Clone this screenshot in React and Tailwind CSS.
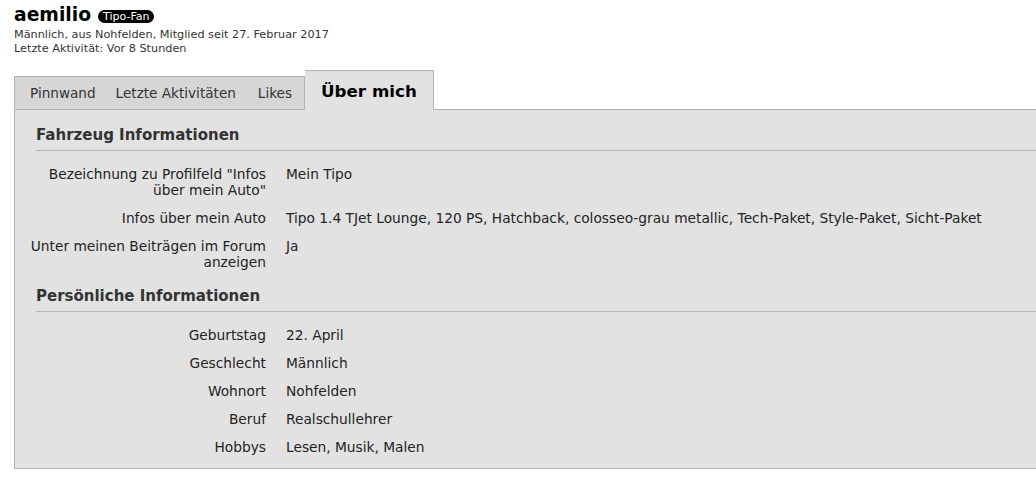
import React from 'react';

const fahrzeug = [
  { label: 'Bezeichnung zu Profilfeld "Infos über mein Auto"', value: 'Mein Tipo' },
  { label: 'Infos über mein Auto', value: 'Tipo 1.4 TJet Lounge, 120 PS, Hatchback, colosseo-grau metallic, Tech-Paket, Style-Paket, Sicht-Paket' },
  { label: 'Unter meinen Beiträgen im Forum anzeigen', value: 'Ja' },
];

const persoenlich = [
  { label: 'Geburtstag', value: '22. April' },
  { label: 'Geschlecht', value: 'Männlich' },
  { label: 'Wohnort', value: 'Nohfelden' },
  { label: 'Beruf', value: 'Realschullehrer' },
  { label: 'Hobbys', value: 'Lesen, Musik, Malen' },
];

const Section = ({ title, rows }) => (
  <div>
    <h3 className="text-[15px] font-bold text-[#333] leading-[20px] pb-[5px] border-b border-[#b4b4b4]">
      {title}
    </h3>
    <dl className="pt-[15px] flex flex-col gap-[12px] pb-[12px] ml-[-10px]">
      {rows.map((r) => (
        <div key={r.label} className="flex">
          <dt className="w-[240px] text-right leading-[16px]">{r.label}</dt>
          <dd className="pl-[20px] leading-[16px]">{r.value}</dd>
        </div>
      ))}
    </dl>
  </div>
);

const App = () => {
  return (
    <div className="w-[1036px] h-[482px] overflow-hidden bg-white text-[#222]" style={{ fontFamily: '"DejaVu Sans", Verdana, sans-serif' }}>
      <div className="pl-[14px] pt-[3px]">
        <div className="flex items-center gap-[7px]">
          <h1 className="text-[18.75px] font-bold leading-[24px] text-black">aemilio</h1>
          <span className="bg-black text-white text-[11px] leading-[13px] px-[5px] rounded-full mt-[2px]">Tipo-Fan</span>
        </div>
        <div className="pt-[1px]">
          <p className="text-[11.25px] leading-[14px] text-[#333]">Männlich, aus Nohfelden, Mitglied seit 27. Februar 2017</p>
          <p className="text-[11.25px] leading-[14px] text-[#333]">Letzte Aktivität: Vor 8 Stunden</p>
        </div>
      </div>

      <div className="ml-[14px] mt-[13px] w-[1040px]">
        <div className="flex items-end">
          <div className="flex h-[33px] items-center bg-[#d6d6d6] border border-[#b4b4b4] border-b-0 pl-[5px] pr-[2px] text-[13.6px] text-[#333]">
            <span className="px-[10px]">Pinnwand</span>
            <span className="pl-[10px] pr-[12px]">Letzte Aktivitäten</span>
            <span className="px-[10px]">Likes</span>
          </div>
          <div className="h-[40px] flex items-center bg-[#e2e2e2] border border-[#b4b4b4] border-b-0 border-l-0 px-[16px] pt-[3px] text-[16.7px] font-bold text-black relative top-[1px]">
            Über mich
          </div>
          <div className="flex-1" />
        </div>
        <div className="bg-[#e2e2e2] border border-[#b4b4b4] border-r-0 pl-[21px] pt-[15px] pb-[1px] text-[13.75px] text-[#222]">
          <Section title="Fahrzeug Informationen" rows={fahrzeug} />
          <div className="pt-[4px]">
            <Section title="Persönliche Informationen" rows={persoenlich} />
          </div>
        </div>
      </div>
    </div>
  );
};

export default App;
